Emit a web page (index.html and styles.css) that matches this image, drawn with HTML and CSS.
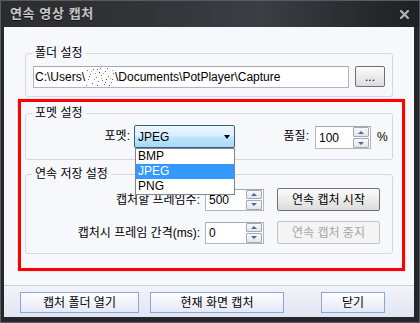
FILE: index.html
```html
<!DOCTYPE html>
<html lang="ko">
<head>
<meta charset="utf-8">
<title>연속 영상 캡처</title>
<link rel="stylesheet" href="styles.css">
</head>
<body>
<div class="window">
  <div class="titlebar">
    <span class="title">연속 영상 캡처</span>
    <svg class="close" width="9" height="9" viewBox="0 0 9 9"><path d="M1 1L8 8M8 1L1 8" stroke="#b4b4b4" stroke-width="2.2" stroke-linecap="square"/></svg>
  </div>
  <div class="client">
    <div class="group g-folder">
      <span class="gtitle">폴더 설정</span>
      <div class="path-row">
        <div class="textbox path">C:\Users\<svg class="blur" width="30" height="20" viewBox="0 0 30 20"><g><rect x="2" y="3" width="1" height="1" fill="#6a4ad0"/><rect x="5" y="7" width="1" height="1" fill="#d07a20"/><rect x="8" y="2" width="1" height="1" fill="#4060d0"/><rect x="11" y="10" width="1" height="1" fill="#b08040"/><rect x="14" y="5" width="1" height="1" fill="#303090"/><rect x="17" y="13" width="1" height="1" fill="#c05070"/><rect x="20" y="4" width="1" height="1" fill="#5070c0"/><rect x="23" y="9" width="1" height="1" fill="#9050c0"/><rect x="26" y="15" width="1" height="1" fill="#4080d0"/><rect x="3" y="12" width="1" height="1" fill="#b07040"/><rect x="7" y="16" width="1" height="1" fill="#4a4ad0"/><rect x="10" y="6" width="1" height="1" fill="#7090d0"/><rect x="13" y="14" width="1" height="1" fill="#806040"/><rect x="16" y="8" width="1" height="1" fill="#6070e0"/><rect x="19" y="17" width="1" height="1" fill="#b04060"/><rect x="22" y="1" width="1" height="1" fill="#5050c0"/><rect x="25" y="11" width="1" height="1" fill="#c08030"/><rect x="28" y="6" width="1" height="1" fill="#4070d0"/><rect x="1" y="18" width="1" height="1" fill="#7060c0"/><rect x="15" y="1" width="1" height="1" fill="#907050"/><rect x="21" y="12" width="1" height="1" fill="#3a50b0"/><rect x="9" y="12" width="1" height="1" fill="#a090e0"/><rect x="27" y="3" width="1" height="1" fill="#80a0e0"/><rect x="4" y="9" width="1" height="1" fill="#6050a0"/><rect x="18" y="6" width="1" height="1" fill="#e08050"/><rect x="24" y="18" width="1" height="1" fill="#5060d0"/><rect x="12" y="18" width="1" height="1" fill="#4040b0"/><rect x="6" y="4" width="1" height="1" fill="#90a0f0"/><rect x="20" y="15" width="1" height="1" fill="#d06080"/><rect x="12" y="2" width="1" height="1" fill="#5050a0"/><rect x="27" y="12" width="1" height="1" fill="#3060c0"/><rect x="16" y="11" width="1" height="1" fill="#c0a040"/></g></svg>\Documents\PotPlayer\Capture</div>
        <button class="btn browse">...</button>
      </div>
    </div>

    <div class="group g-format">
      <span class="gtitle">포멧 설정</span>
      <div class="format-row">
        <span class="lbl l-format">포멧:</span>
        <div class="select">JPEG<span class="arrow"></span>
          <ul class="dropdown">
            <li>BMP</li>
            <li class="sel">JPEG</li>
            <li>PNG</li>
          </ul>
        </div>
        <span class="lbl l-quality">품질:</span>
        <div class="textbox spin q"><span class="val">100</span><span class="spinbtns"><span class="sb up"></span><span class="sb down"></span></span></div>
        <span class="pct">%</span>
      </div>
    </div>

    <div class="group g-cont">
      <span class="gtitle">연속 저장 설정</span>
      <div class="crow">
        <span class="clbl">캡처할 프레임수:</span>
        <div class="textbox spin c"><span class="val">500</span><span class="spinbtns"><span class="sb up"></span><span class="sb down"></span></span></div>
        <button class="btn cbtn">연속 캡처 시작</button>
      </div>
      <div class="crow row2">
        <span class="clbl">캡처시 프레임 간격(ms):</span>
        <div class="textbox spin c"><span class="val">0</span><span class="spinbtns"><span class="sb up"></span><span class="sb down"></span></span></div>
        <button class="btn cbtn disabled">연속 캡처 중지</button>
      </div>
    </div>

    <div class="bottombar">
      <button class="bbtn b1">캡처 폴더 열기</button>
      <button class="bbtn b2">현재 화면 캡처</button>
      <button class="bbtn b3">닫기</button>
    </div>

    <div class="annot"></div>
  </div>
</div>
</body>
</html>
```

FILE: styles.css
```css
* { box-sizing: border-box; }
body {
  margin: 0;
  width: 420px;
  height: 323px;
  overflow: hidden;
  font: 12px/14px "Liberation Sans", "Noto Sans CJK KR", sans-serif;
  color: #000;
  background: #1e1f22;
}
.window {
  width: 420px;
  height: 323px;
  border: 1px solid #5a5b60;
  background: #26272b;
  display: flex;
  flex-direction: column;
}
.titlebar {
  height: 26px;
  flex: none;
  display: flex;
  align-items: center;
  padding-left: 9px;
  background: linear-gradient(90deg, #2b2c30 0%, #333438 35%, #3d3e43 62%, #2a2b2f 85%, #1f2023 100%);
}
.title {
  font-weight: bold;
  font-size: 13px;
  color: #c8c8c8;
  letter-spacing: 0.6px;
  text-shadow: 0 1px 0 #111;
}
.close { margin-left: auto; margin-right: 10px; }
.client {
  position: relative;
  margin: 0 5px 0 3px;
  height: 290px;
  background: #f6f8fc;
  display: flex;
  flex-direction: column;
}
.group {
  position: relative;
  margin-left: 21px;
  width: 368px;
  border: 1px solid #d3d8e1;
  border-radius: 3px;
  flex: none;
}
.gtitle {
  position: absolute;
  top: -8px;
  left: 6px;
  padding: 0 3px;
  background: #f6f8fc;
  line-height: 14px;
  white-space: nowrap;
}
.g-folder { margin-top: 26px; height: 44px; padding: 12px 0 0 7px; }
.path-row { display: flex; align-items: flex-start; gap: 6px; }
.textbox {
  height: 22px;
  border: 1px solid #b1b5bd;
  border-top-color: #a4a8b0;
  background: #fff;
  display: flex;
  align-items: center;
  padding-left: 3px;
}
.path { width: 316px; padding-left: 1px; white-space: nowrap; overflow: hidden; }
.blur { flex: none; vertical-align: middle; }
.btn {
  font: inherit;
  color: #000;
  border: 1px solid #707070;
  border-radius: 2px;
  background: linear-gradient(#fbfbfb, #ececec 50%, #dcdcdc);
  padding: 0;
  display: flex;
  align-items: center;
  justify-content: center;
}
.browse { width: 30px; height: 21px; }

.g-format { margin-top: 16px; height: 47px; padding-top: 11px; z-index: 2; }
.format-row { display: flex; align-items: flex-start; }
.lbl { line-height: 23px; text-align: right; white-space: nowrap; }
.l-format { width: 104px; margin-right: 4px; }
.select {
  position: relative;
  width: 101px;
  height: 23px;
  border: 1px solid #3c5e80;
  border-radius: 2px;
  background: linear-gradient(#eaf6fd, #d9f0fc 48%, #bee6fd 52%, #a7d9f5);
  padding-left: 3px;
  display: flex;
  align-items: center;
}
.arrow {
  position: absolute;
  right: 4px;
  top: 9px;
  width: 0;
  height: 0;
  border-left: 3.5px solid transparent;
  border-right: 3.5px solid transparent;
  border-top: 4px solid #000;
}
.dropdown {
  position: absolute;
  left: 0;
  top: 22px;
  width: 100px;
  margin: 0;
  padding: 0;
  list-style: none;
  background: #fff;
  border: 1px solid #80858e;
  z-index: 5;
}
.dropdown li { height: 15px; line-height: 15px; padding-left: 2px; }
.dropdown li.sel { background: #3399ff; color: #fff; }
.l-quality { width: 74px; margin-right: 6px; }
.q { width: 56px; height: 23px; margin-top: 1px; }
.pct { margin-left: 6px; line-height: 25px; }
.spin { padding-right: 1px; }
.spinbtns {
  margin-left: auto;
  width: 16px;
  height: 100%;
  display: flex;
  flex-direction: column;
  gap: 1px;
  padding: 0;
}
.sb {
  flex: 1;
  border: 1px solid #a3aab5;
  border-radius: 1px;
  background: linear-gradient(#f7f8fa, #e2e6ec);
  display: flex;
  align-items: center;
  justify-content: center;
}
.sb::after {
  content: "";
  width: 0;
  height: 0;
  border-left: 3px solid transparent;
  border-right: 3px solid transparent;
}
.up::after { border-bottom: 3px solid #4b6a9c; }
.down::after { border-top: 3px solid #4b6a9c; }

.g-cont { margin-top: 14px; height: 80px; padding-top: 13px; z-index: 1; }
.crow { display: flex; align-items: center; height: 23px; }
.row2 { margin-top: 10px; }
.clbl { width: 174px; margin-right: 5px; text-align: right; white-space: nowrap; }
.c { width: 59px; height: 22px; }
.cbtn { width: 103px; height: 23px; margin-left: 13px; }
.cbtn.disabled { border-color: #c3c3c3; background: #f4f4f4; color: #a6a6a6; }

.bottombar {
  margin-top: auto;
  height: 32px;
  flex: none;
  border-top: 1px solid #c8cedc;
  background: linear-gradient(#f2f4fa, #e1e5f1);
  display: flex;
  align-items: flex-start;
  padding: 6px 0 0 16px;
}
.bbtn {
  font: inherit;
  color: #000;
  height: 21px;
  padding: 0;
  border: 1px solid #8ba4dc;
  background: linear-gradient(#ffffff, #f1f3fb 50%, #e5e9f6);
}
.b1 { width: 119px; }
.b2 { width: 134px; margin-left: 11px; }
.b3 { width: 64px; margin-left: 37px; }

.annot {
  position: absolute;
  left: 14px;
  top: 72px;
  width: 387px;
  height: 172px;
  border: 3px solid #ff0000;
  box-shadow: 0 0 1px rgba(255, 60, 60, 0.6);
  pointer-events: none;
  z-index: 10;
}
```
